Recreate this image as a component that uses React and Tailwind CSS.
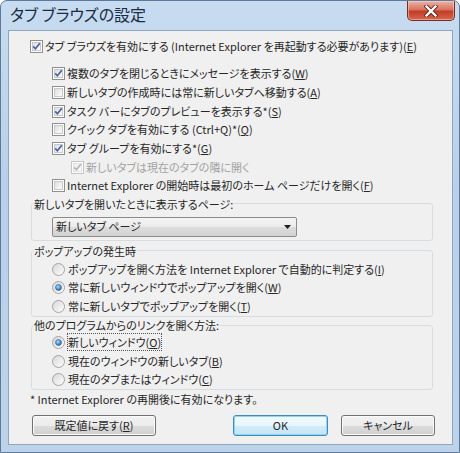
import React from "react";

const Check = ({ checked, disabled }) => (
  <svg width="13" height="13" viewBox="0 0 13 13" className="shrink-0">
    <defs>
      <linearGradient id={disabled ? "cbd" : "cb"} x1="0" y1="0" x2="1" y2="1">
        <stop offset="0" stopColor={disabled ? "#ececec" : "#dcdcdc"} />
        <stop offset="1" stopColor="#ffffff" />
      </linearGradient>
    </defs>
    <rect x="0.5" y="0.5" width="12" height="12" fill="#fff" stroke={disabled ? "#c5c5c5" : "#8e8f8f"} />
    <rect x="2.5" y="2.5" width="8" height="8" fill={`url(#${disabled ? "cbd" : "cb"})`} stroke={disabled ? "#e0e0e0" : "#c9c9c9"} />
    {checked && (
      <path
        d="M3.2 6.4 L5.4 8.8 L9.8 3.2"
        fill="none"
        stroke={disabled ? "#b4b4b4" : "#4762a8"}
        strokeWidth="1.7"
      />
    )}
  </svg>
);

const Radio = ({ checked }) => (
  <svg width="13" height="13" viewBox="0 0 13 13" className="shrink-0">
    <defs>
      <radialGradient id="rdot" cx="0.4" cy="0.35" r="0.7">
        <stop offset="0" stopColor="#a9dcf7" />
        <stop offset="1" stopColor="#1a5fb0" />
      </radialGradient>
      <linearGradient id="rbg" x1="0" y1="0" x2="1" y2="1">
        <stop offset="0" stopColor="#d6d6d6" />
        <stop offset="1" stopColor="#ffffff" />
      </linearGradient>
    </defs>
    <circle cx="6.5" cy="6.5" r="6" fill="url(#rbg)" stroke="#a3a3a3" />
    {checked && <circle cx="6.5" cy="6.5" r="3" fill="url(#rdot)" stroke="#2a5d97" strokeWidth="0.6" />}
  </svg>
);

const K = ({ children }) => <span className="underline">{children}</span>;

const CheckRow = ({ pl, checked, disabled, children }) => (
  <div className={`flex h-[18.67px] items-center gap-[2px] ${pl}`}>
    <Check checked={checked} disabled={disabled} />
    <span className={`whitespace-nowrap leading-none ${disabled ? "text-[#a3a3a3]" : ""}`}>{children}</span>
  </div>
);

const RadioRow = ({ checked, children }) => (
  <div className="flex h-[18.67px] items-center gap-[3px] pl-[20px]">
    <Radio checked={checked} />
    <span className="whitespace-nowrap leading-none">{children}</span>
  </div>
);

const Btn = ({ w, primary, children }) => (
  <button
    className={`h-[21px] ${w} rounded-[3px] border text-[11px] leading-none ${
      primary
        ? "border-[#3b8cc0] bg-[linear-gradient(to_bottom,#f4fbfe_0%,#e6f5fc_50%,#d3ecf8_51%,#c4e4f5_100%)] shadow-[inset_0_0_0_1px_#8fd6f5]"
        : "border-[#707070] bg-[linear-gradient(to_bottom,#f2f2f2_0%,#ebebeb_50%,#dddddd_51%,#cfcfcf_100%)] shadow-[inset_0_0_0_1px_#fbfbfb]"
    }`}
  >
    {children}
  </button>
);

export default function App() {
  return (
    <div className="flex h-[453px] w-[460px] flex-col overflow-hidden rounded-t-[7px] border border-[#5d7a9c] bg-[linear-gradient(to_bottom,#c7dcf0,#b9d0e8_40%,#bcd3ea)] text-[11px] text-[#262626] [font-family:'Noto_Sans_CJK_JP','Noto_Sans',sans-serif] [font-feature-settings:'palt']">
      <div className="flex h-[29px] shrink-0 items-start justify-between pl-[9px] pr-[4px]">
        <span className="mt-[5px] text-[16px] leading-none text-[#1b2d44]">タブ ブラウズの設定</span>
        <div className="flex h-[20px] w-[48px] items-center justify-center rounded-b-[5px] border border-t-0 border-[#7a2b21] bg-[linear-gradient(to_bottom,#eab3a6_0%,#d9735f_45%,#c23d27_55%,#d5664c_100%)] shadow-[inset_0_0_0_1px_rgba(255,220,210,0.5)]">
          <svg width="14" height="12" viewBox="0 0 14 12">
            <path d="M2.5 1.5 L11.5 10.5 M11.5 1.5 L2.5 10.5" stroke="#5a1d16" strokeWidth="4" strokeLinecap="square" />
            <path d="M2.5 1.5 L11.5 10.5 M11.5 1.5 L2.5 10.5" stroke="#ffffff" strokeWidth="2.4" strokeLinecap="square" />
          </svg>
        </div>
      </div>

      <div className="ml-[7px] mr-[6px] flex h-[415px] shrink-0 flex-col border border-[#8fa6bf] bg-[#f0f0f0] pt-[6.67px]">
        <CheckRow pl="pl-[21px]" checked>
          タブ ブラウズを有効にする (Internet Explorer を再起動する必要があります)(<K>E</K>)
        </CheckRow>
        <div className="mt-[8.33px]">
          <CheckRow pl="pl-[43px]" checked>
            複数のタブを閉じるときにメッセージを表示する(<K>W</K>)
          </CheckRow>
          <CheckRow pl="pl-[43px]">
            新しいタブの作成時には常に新しいタブへ移動する(<K>A</K>)
          </CheckRow>
          <CheckRow pl="pl-[43px]" checked>
            タスク バーにタブのプレビューを表示する*(<K>S</K>)
          </CheckRow>
          <CheckRow pl="pl-[43px]">
            クイック タブを有効にする (Ctrl+Q)*(<K>Q</K>)
          </CheckRow>
          <CheckRow pl="pl-[43px]" checked>
            タブ グループを有効にする*(<K>G</K>)
          </CheckRow>
          <CheckRow pl="pl-[62px]" checked disabled>
            新しいタブは現在のタブの隣に開く
          </CheckRow>
          <CheckRow pl="pl-[43px]">
            Internet Explorer の開始時は最初のホーム ページだけを開く(<K>F</K>)
          </CheckRow>
        </div>

        <fieldset className="ml-[22px] mt-[0.67px] w-[402px] rounded-[3px] border border-[#d5dde3] pb-[3px]">
          <legend className="ml-[1px] h-[16px] px-[1px] leading-[16px]">新しいタブを開いたときに表示するページ:</legend>
          <div className="ml-[20px] mt-[5px] flex h-[20px] w-[245px] items-center justify-between rounded-[2px] border border-[#8b8b8b] bg-[linear-gradient(to_bottom,#f3f3f3_0%,#ebebeb_50%,#dddddd_51%,#d2d2d2_100%)] pl-[3px] pr-[5px]">
            <span className="leading-none">新しいタブ ページ</span>
            <svg width="7" height="4" viewBox="0 0 7 4">
              <path d="M0 0 H7 L3.5 4 Z" fill="#1e1e1e" />
            </svg>
          </div>
        </fieldset>

        <fieldset className="ml-[22px] mt-[2px] w-[402px] rounded-[3px] border border-[#d5dde3]">
          <legend className="ml-[1px] h-[16px] px-[1px] leading-[16px]">ポップアップの発生時</legend>
          <div className="mt-[1px]">
            <RadioRow>
              ポップアップを開く方法を Internet Explorer で自動的に判定する(<K>I</K>)
            </RadioRow>
            <RadioRow checked>
              常に新しいウィンドウでポップアップを開く(<K>W</K>)
            </RadioRow>
            <RadioRow>
              常に新しいタブでポップアップを開く(<K>T</K>)
            </RadioRow>
          </div>
        </fieldset>

        <fieldset className="ml-[22px] mt-[0.33px] w-[402px] rounded-[3px] border border-[#d5dde3]">
          <legend className="ml-[1px] h-[16px] px-[1px] leading-[16px]">他のプログラムからのリンクを開く方法:</legend>
          <RadioRow checked>
            <span className="outline outline-1 outline-dotted outline-[#555]">新しいウィンドウ(<K>O</K>)</span>
          </RadioRow>
          <RadioRow>
            現在のウィンドウの新しいタブ(<K>B</K>)
          </RadioRow>
          <RadioRow>
            現在のタブまたはウィンドウ(<K>C</K>)
          </RadioRow>
        </fieldset>

        <div className="ml-[21px] mt-[1px] h-[16px] leading-[16px]">* Internet Explorer の再開後に有効になります。</div>

        <div className="mt-[8px] flex items-center pl-[23px] pr-[17px]">
          <Btn w="w-[124px]">
            既定値に戻す(<K>R</K>)
          </Btn>
          <div className="ml-auto flex gap-[13px]">
            <Btn w="w-[95px]" primary>
              OK
            </Btn>
            <Btn w="w-[94px]">キャンセル</Btn>
          </div>
        </div>
      </div>
    </div>
  );
}
